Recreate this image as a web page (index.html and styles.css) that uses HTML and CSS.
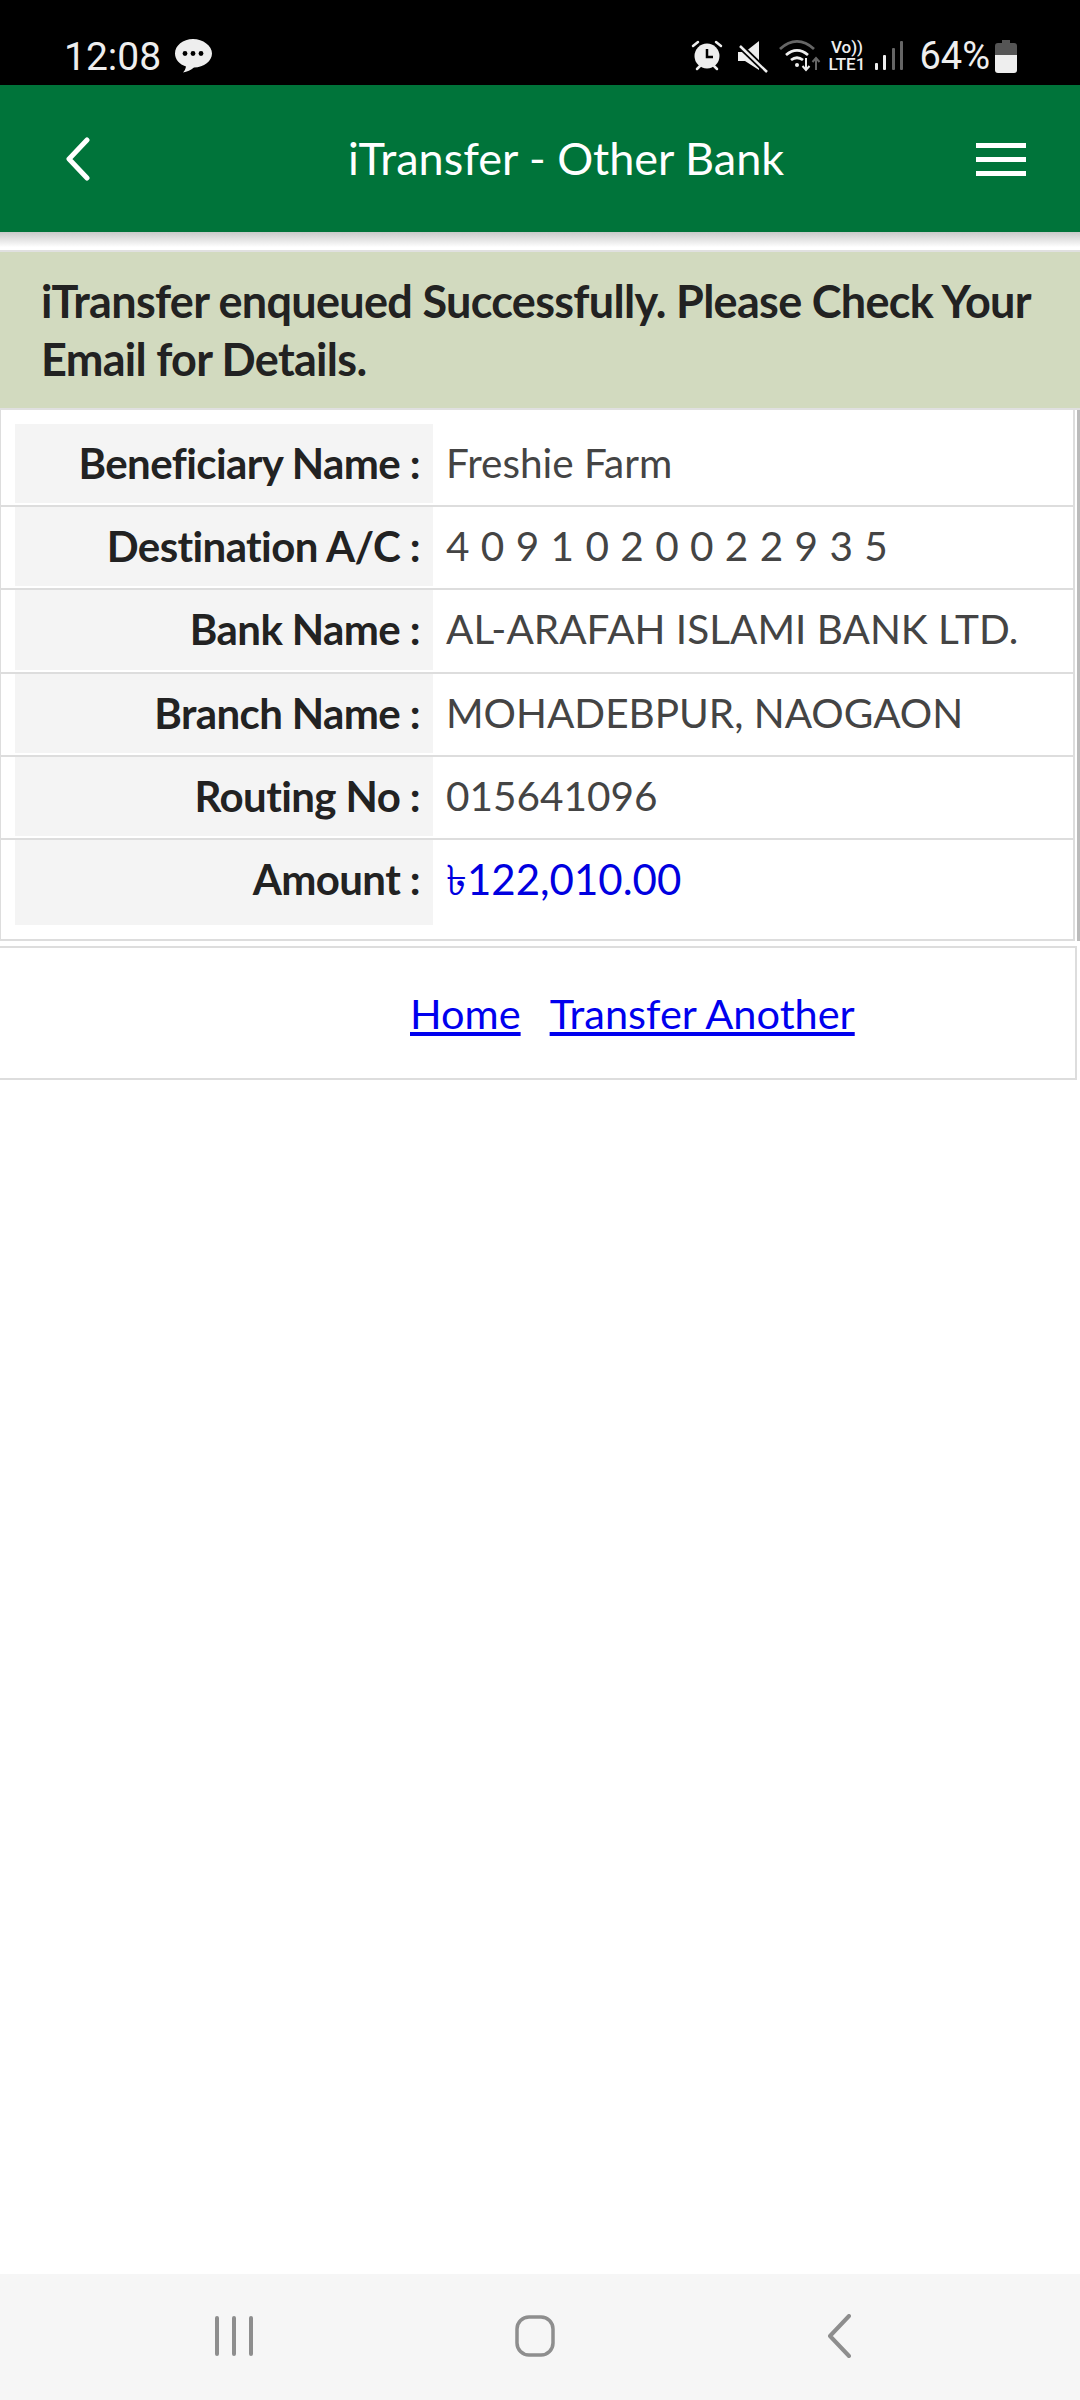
FILE: index.html
```html
<!DOCTYPE html>
<html lang="en">
<head>
<meta charset="utf-8">
<title>iTransfer - Other Bank</title>
<link rel="stylesheet" href="styles.css">
</head>
<body>
<div class="screen">
  <div class="status">
    <div class="status-left">
      <span class="time">12:08</span>
      <svg class="ico-chat" width="38" height="36" viewBox="0 0 38 36"><path fill="#eee" d="M19 1C9 1 1 7.500 1 15.500c0 6 4.500 11 11 13-.5 2.500-1.500 4.500-3 6 4-.5 8-2.500 11-5 10 0 18-6.500 18-14S29 1 19 1z"/><circle cx="11" cy="15.500" r="2.400" fill="#000"/><circle cx="19" cy="15.500" r="2.400" fill="#000"/><circle cx="27" cy="15.500" r="2.400" fill="#000"/></svg>
    </div>
    <div class="status-right">
      <svg class="s-alarm" width="32" height="32" viewBox="0 0 32 32"><circle cx="16" cy="17" r="12.500" fill="#eee"/><path d="M16 10v8h6" fill="none" stroke="#000" stroke-width="2.500"/><path d="M2 7l5-4M30 7l-5-4M6 30l3-3M26 30l-3-3" stroke="#eee" stroke-width="2.500" stroke-linecap="round"/></svg>
      <svg class="s-mute" width="32" height="32" viewBox="0 0 32 32"><path fill="#eee" d="M1 11h7L22 0v29L8 20H1z"/><path d="M0 2l30 29" stroke="#000" stroke-width="6"/><path d="M3 5l27 26" stroke="#eee" stroke-width="2.500"/></svg>
      <svg class="s-wifi" width="42" height="32" viewBox="0 0 42 32"><path d="M1 9C12-1 24-1 35 9" fill="none" stroke="#666" stroke-width="2.800"/><path d="M7 15c7-6 15-6 22 0" fill="none" stroke="#eee" stroke-width="2.800"/><path d="M12 20c4-3 8-3 12 0" fill="none" stroke="#eee" stroke-width="2.800"/><circle cx="18" cy="25" r="2" fill="#eee"/><path d="M27 18v11M23.500 26l3.500 4 3.500-4" fill="none" stroke="#eee" stroke-width="2"/><path d="M37 30V19M33.500 22l3.500-4 3.500 4" fill="none" stroke="#666" stroke-width="2"/></svg>
      <span class="s-net"><span class="vo">Vo))</span><span class="lte">LTE1</span></span>
      <svg class="s-signal" width="30" height="31" viewBox="0 0 30 31"><rect x="1" y="23" width="3" height="7" rx="1" fill="#eee"/><rect x="9" y="15" width="3" height="15" rx="1" fill="#eee"/><rect x="18" y="8" width="3" height="22" rx="1" fill="#666"/><rect x="26" y="1" width="3" height="29" rx="1" fill="#666"/></svg>
      <span class="pct">64%</span>
      <svg class="s-batt" width="22" height="33" viewBox="0 0 22 33"><path fill="#555" d="M7 0h8v3h4a3 3 0 0 1 3 3v9H0V6a3 3 0 0 1 3-3h4z"/><path fill="#eee" d="M0 15h22v15a3 3 0 0 1-3 3H3a3 3 0 0 1-3-3z"/></svg>
    </div>
  </div>

  <header class="appbar">
    <svg class="back" width="26" height="44" viewBox="0 0 26 44"><path d="M22 3L4 22l18 19" fill="none" stroke="#fff" stroke-width="5" stroke-linecap="round" stroke-linejoin="round"/></svg>
    <h1 class="title">iTransfer - Other Bank</h1>
    <div class="menu"><i></i><i></i><i></i></div>
  </header>
  <div class="shadow"></div>

  <main class="content">
    <div class="alert">iTransfer enqueued Successfully. Please Check Your Email for Details.</div>
    <div class="details-wrap">
      <div class="details">
        <div class="row"><div class="label">Beneficiary Name :</div><div class="value">Freshie Farm</div></div>
        <div class="row"><div class="label">Destination A/C :</div><div class="value spaced">4 0 9 1 0 2 0 0 2 2 9 3 5</div></div>
        <div class="row tall"><div class="label">Bank Name :</div><div class="value">AL-ARAFAH ISLAMI BANK LTD.</div></div>
        <div class="row"><div class="label">Branch Name :</div><div class="value">MOHADEBPUR, NAOGAON</div></div>
        <div class="row"><div class="label">Routing No :</div><div class="value">015641096</div></div>
        <div class="row last"><div class="label">Amount :</div><div class="value amount">৳122,010.00</div></div>
      </div>
      <div class="edge"></div>
    </div>
    <div class="links"><a href="#">Home</a><a href="#">Transfer Another</a></div>
  </main>

  <nav class="navbar">
    <svg width="40" height="40" viewBox="0 0 40 40"><path d="M3 2v36M20 2v36M37 2v36" stroke="#8e8e8e" stroke-width="4" stroke-linecap="round" fill="none"/></svg>
    <svg class="nav-home" width="40" height="42" viewBox="0 0 40 42"><rect x="2" y="2" width="36" height="38" rx="12" fill="none" stroke="#8e8e8e" stroke-width="3.500"/></svg>
    <svg width="24" height="44" viewBox="0 0 24 44"><path d="M22 2L3 22l19 20" fill="none" stroke="#8e8e8e" stroke-width="4" stroke-linecap="round" stroke-linejoin="round"/></svg>
  </nav>
</div>
</body>
</html>
```
FILE: styles.css
```css
* { box-sizing: border-box; }
html, body { margin: 0; padding: 0; background: #fff; }
.screen { width: 1080px; height: 2400px; display: flex; flex-direction: column; font-family: "Lato", "Noto Sans", sans-serif; overflow: hidden; }

.status { height: 85px; background: #000; display: flex; justify-content: space-between; padding: 38px 0 0 64px; flex: none; }
.status-left { display: flex; align-items: flex-start; }
.time { font-family: "Roboto", sans-serif; font-size: 39px; line-height: 38px; color: #eee; }
.ico-chat { margin: 0 0 0 13px; }
.status-right { display: flex; align-items: flex-start; padding-right: 63px; }
.s-alarm { margin-top: 1px; }
.s-mute { margin: 3px 0 0 14px; }
.s-wifi { margin: 2px 0 0 10px; }
.s-net { display: flex; flex-direction: column; align-items: center; margin: 1px 0 0 5px; width: 41px; color: #eee; font-family: "Roboto", sans-serif; font-weight: 500; font-size: 17px; line-height: 17px; }
.s-signal { margin: 2px 0 0 7px; }
.pct { font-family: "Roboto", sans-serif; font-size: 38px; line-height: 36px; color: #eee; margin-left: 15px; }
.s-batt { margin: 2px 0 0 5px; }

.appbar { height: 147px; background: #00743a; display: flex; align-items: center; justify-content: center; position: relative; flex: none; padding: 0 0 2px 52px; }
.title { margin: 0; font-size: 45px; font-weight: 400; color: #fff; }
.back { position: absolute; left: 65px; top: 52px; }
.menu { position: absolute; left: 976px; top: 58px; width: 50px; display: flex; flex-direction: column; gap: 9px; }
.menu i { display: block; height: 5px; background: #fff; }
.shadow { height: 18px; flex: none; background: linear-gradient(#c9c9c9, #fff 85%); }

.content { flex: 1; display: flex; flex-direction: column; }
.alert { background: #d2dabf; border-top: 2px solid #e0e0e0; border-bottom: 2px solid #e0e0e0; height: 160px; padding: 20px 40px 0 41px; font-size: 45px; line-height: 58px; font-weight: 700; color: #222; letter-spacing: -.7px; }

.details-wrap { display: flex; height: 531px; flex: none; }
.details { width: 1075px; height: 531px; border: 2px solid #ddd; border-width: 0 2px 2px 1px; padding-top: 14px; }
.edge { width: 3px; margin-left: 2px; background: #bbb; }
.row { display: grid; grid-template-columns: 418px 1fr; height: 83px; padding: 0 0 2px 14px; border-bottom: 2px solid #ddd; }
.row.tall { height: 84px; }
.row.last { height: 85px; padding-bottom: 0; border-bottom: 0; }
.label { background: #f4f4f4; text-align: right; padding: 12px 13px 0 0; font-size: 42px; line-height: 54px; font-weight: 700; color: #222; letter-spacing: -.6px; }
.value { padding: 12px 0 0 13px; font-size: 40.500px; line-height: 54px; color: #444; }
.spaced { word-spacing: 1px; }
.amount { color: #0000e0; font-size: 42px; }

.links { width: 1077px; height: 134px; margin-top: 5px; flex: none; border: 2px solid #ddd; border-left: 0; display: flex; align-items: center; padding-left: 410px; gap: 29px; font-size: 41.500px; }
.links a { color: #0000ee; text-decoration: underline; }

.navbar { height: 126px; flex: none; background: #f6f6f6; display: flex; align-items: center; justify-content: space-between; padding: 0 229px 3px 214px; }
.nav-home { margin-right: 11px; }
```
